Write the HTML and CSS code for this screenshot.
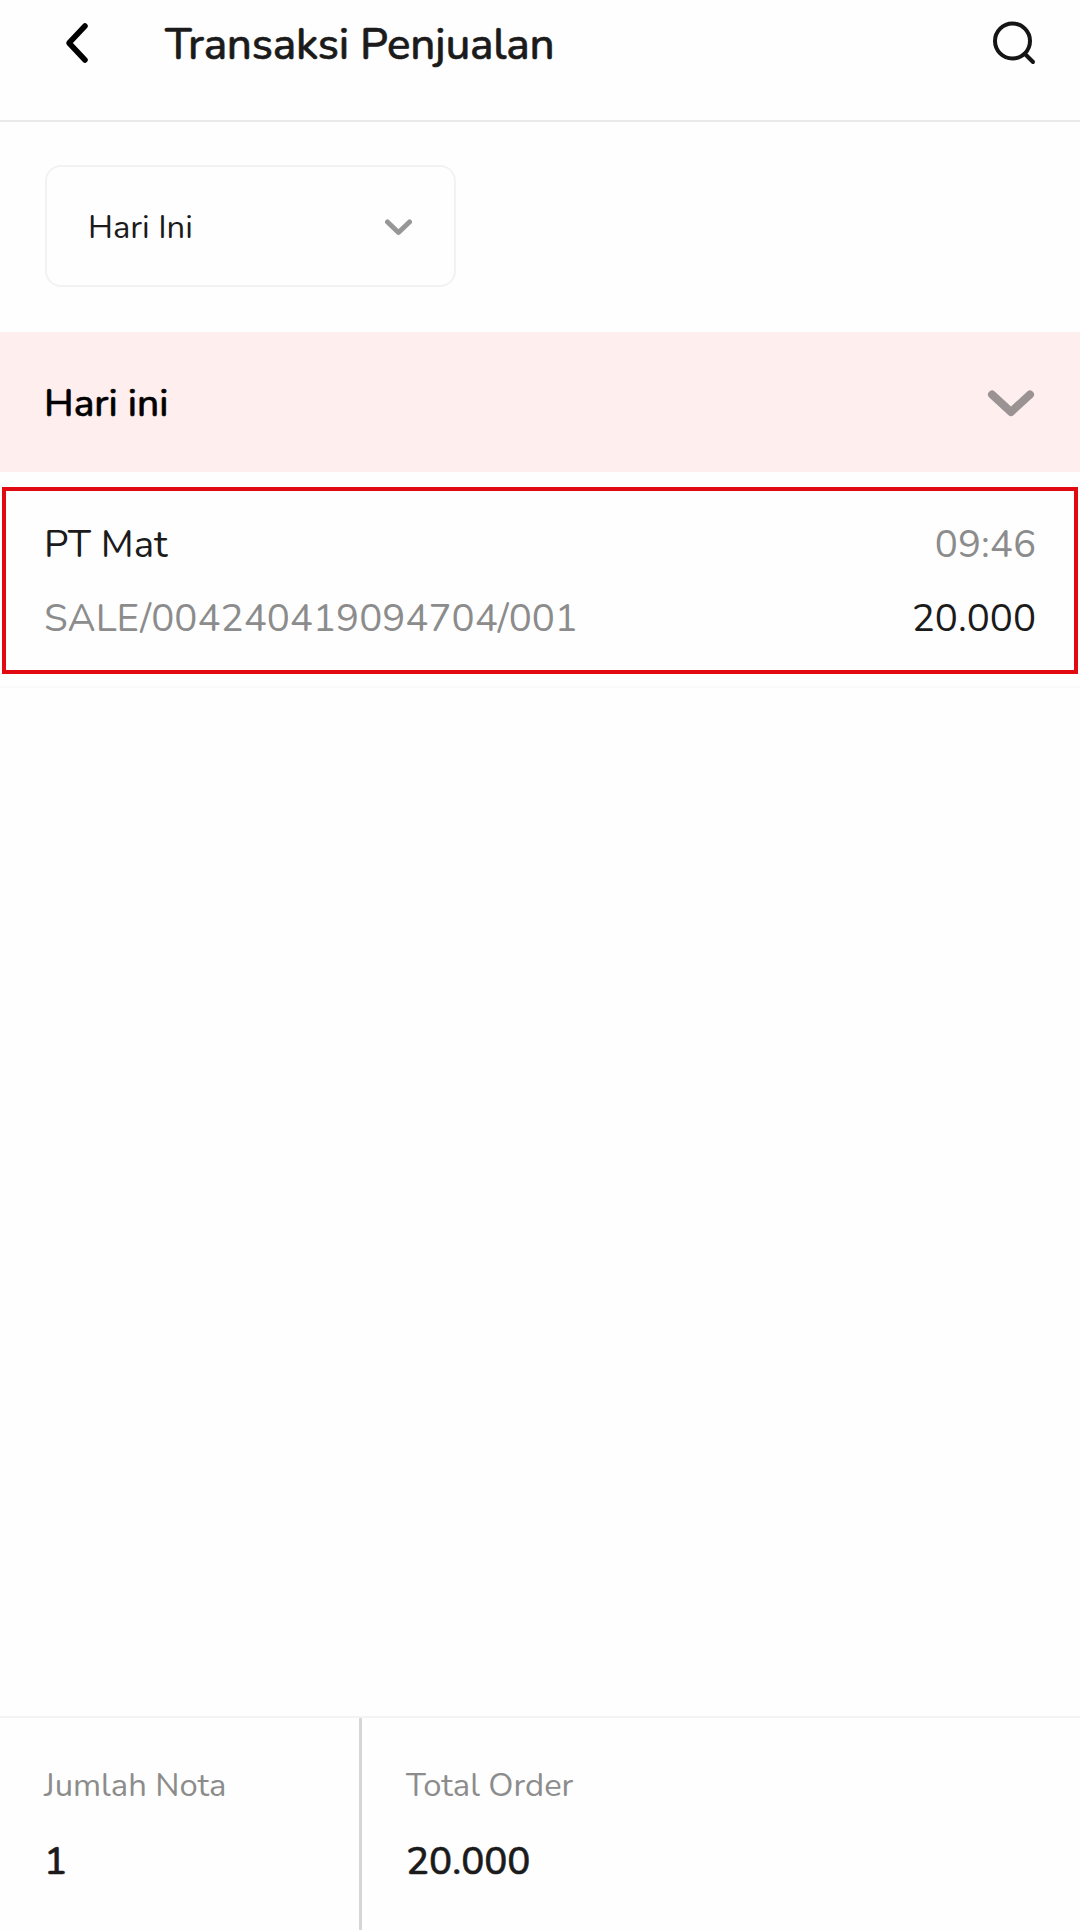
FILE: index.html
```html
<!DOCTYPE html>
<html lang="id">
<head>
  <meta charset="UTF-8" />
  <meta name="viewport" content="width=device-width, initial-scale=1.0" />
  <title>Transaksi Penjualan</title>
  <link rel="stylesheet" href="styles.css">
</head>
<body>

<div class="page">
  <header class="header">
    <svg class="back-icon" viewBox="0 0 24 42"><path d="M20 4 L4 21 L20 38" /></svg>
    <h1>Transaksi Penjualan</h1>
    <svg class="search-icon" viewBox="0 0 44 44"><circle cx="20.500" cy="20" r="17.500" /><path d="M33 33 L41 41" /></svg>
  </header>

  <div class="filter">
    <div class="select">
      <span>Hari Ini</span>
      <svg class="select-arrow" viewBox="0 0 28 18"><path d="M3.500 4 L14.500 14.500 L25.500 4" /></svg>
    </div>
  </div>

  <div class="group">
    <h2>Hari ini</h2>
    <svg class="group-arrow" viewBox="0 0 48 28"><path d="M5 5.500 L24 23 L43 5.500" /></svg>
  </div>

  <main class="list">
    <div class="item">
      <div class="row">
        <span class="name">PT Mat</span>
        <span class="time">09:46</span>
      </div>
      <div class="row">
        <span class="code">SALE/004240419094704/001</span>
        <span class="amount">20.000</span>
      </div>
    </div>
  </main>

  <footer class="summary">
    <div class="cell nota">
      <span class="label">Jumlah Nota</span>
      <span class="value">1</span>
    </div>
    <div class="cell total">
      <span class="label">Total Order</span>
      <span class="value">20.000</span>
    </div>
  </footer>
</div>

</body>
</html>
```
FILE: styles.css
```css
* {
  box-sizing: border-box;
}

body {
  margin: 0;
  background-color: #fefefe;
  font-family: Nunito, 'Open Sans', sans-serif;
  color: #1b1b1b;
}

svg {
  fill: none;
  stroke-linecap: round;
  stroke-linejoin: round;
  flex-shrink: 0;
}

.page {
  height: 1930px;
  display: flex;
  flex-direction: column;
}

.header {
  height: 122px;
  padding: 0 44px 34px 65px;
  display: flex;
  align-items: center;
  border-bottom: 2px solid #e9e9e9;
}

.header h1 {
  flex: 1;
  margin: 0 0 0 76px;
  padding-top: 4px;
  font-size: 44px;
  font-weight: 500;
  line-height: 82px;
  letter-spacing: -0.25px;
  -webkit-text-stroke: 0.6px;
}

.back-icon {
  width: 24px;
  height: 42px;
  stroke: #000;
  stroke-width: 5.5;
}

.search-icon {
  width: 44px;
  height: 44px;
  stroke: #151515;
  stroke-width: 4;
}

.filter {
  height: 210px;
  padding: 43px 45px;
}

.select {
  width: 411px;
  height: 122px;
  padding: 3px 42px 0 41px;
  display: flex;
  align-items: center;
  justify-content: space-between;
  border: 2px solid #f2f2f2;
  border-radius: 16px;
  font-size: 32.8px;
}

.select-arrow {
  width: 28px;
  height: 18px;
  margin-bottom: 2px;
  stroke: #979797;
  stroke-width: 5;
}

.group {
  height: 140px;
  padding: 0 45px 0 44px;
  display: flex;
  align-items: center;
  justify-content: space-between;
  background-color: #feeeee;
  color: #000;
}

.group h2 {
  margin: 0;
  padding-top: 2px;
  font-size: 38.8px;
  font-weight: 550;
  -webkit-text-stroke: 0.6px;
}

.group-arrow {
  width: 48px;
  height: 28px;
  margin-top: 1px;
  stroke: #9b9393;
  stroke-width: 8;
}

.list {
  flex: 1;
  padding-top: 15px;
}

.item {
  height: 187px;
  margin: 0 2px;
  padding: 17px 38px 0 38px;
  border: 4px solid #e20a12;
}

.list::after {
  content: "";
  display: block;
  margin-top: 12px;
  border-top: 2px solid #f9f9f9;
}

.row {
  display: flex;
  justify-content: space-between;
  font-size: 38.5px;
  font-weight: 370;
  line-height: 74px;
}

.code,
.time {
  color: #8c8c8c;
}

.summary {
  height: 214px;
  display: flex;
  border-top: 2px solid #f3f3f3;
}

.cell {
  display: flex;
  flex-direction: column;
  padding: 35px 45px 0 44px;
}

.nota {
  width: 362px;
  border-right: 3px solid #d6d6d6;
}

.label {
  font-size: 32.8px;
  line-height: 66px;
  color: #8c8c8c;
}

.value {
  font-size: 38.5px;
  font-weight: 550;
  line-height: 86px;
  -webkit-text-stroke: 0.6px;
}
```
